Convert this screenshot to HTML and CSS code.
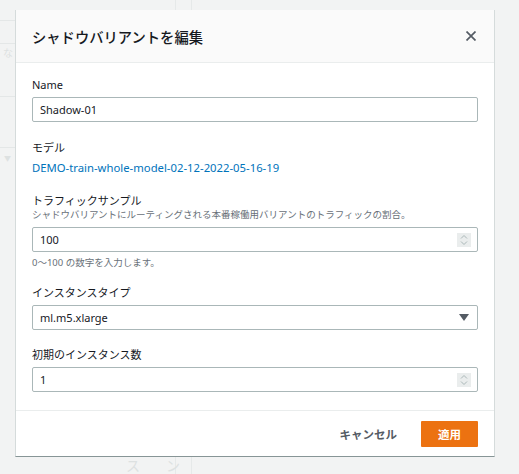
FILE: index.html
```html
<!DOCTYPE html>
<html lang="ja">
<head>
<meta charset="utf-8">
<title>シャドウバリアントを編集</title>
<link rel="stylesheet" href="styles.css">
</head>
<body>
<div class="backdrop" aria-hidden="true">
  <div class="hline l1"></div>
  <div class="hline l2"></div>
  <div class="hline l3"></div>
  <div class="hline l4"></div>
  <div class="vline v1"></div>
  <div class="vline v2"></div>
  <span class="ghost g1">な</span>
  <span class="ghost g2">▼</span>
  <span class="ghost g3">ス</span>
  <span class="ghost g4">ン</span>
</div>
<div class="modal">
  <div class="modal-header">
    <h2 class="modal-title">シャドウバリアントを編集</h2>
    <button class="close-btn" aria-label="閉じる">
      <svg width="10" height="10" viewBox="0 0 10 10"><path d="M0.5 0.5 L9.5 9.5 M9.5 0.5 L0.5 9.5" stroke="#545b64" stroke-width="1.7" fill="none"/></svg>
    </button>
  </div>
  <div class="modal-body">
    <div class="field f-name">
      <div class="label">Name</div>
      <div class="input"><span class="value">Shadow-01</span></div>
    </div>
    <div class="field f-model">
      <div class="label">モデル</div>
      <a class="link" href="#">DEMO-train-whole-model-02-12-2022-05-16-19</a>
    </div>
    <div class="field">
      <div class="label">トラフィックサンプル</div>
      <div class="desc">シャドウバリアントにルーティングされる本番稼働用バリアントのトラフィックの割合。</div>
      <div class="input"><span class="value">100</span><span class="spinner"><svg width="8" height="12" viewBox="0 0 8 12"><path d="M1 4.5 L4 1.5 L7 4.5 M1 7.5 L4 10.5 L7 7.5" stroke="#aab7b8" stroke-width="1" fill="none"/></svg></span></div>
      <div class="help">0〜100 の数字を入力します。</div>
    </div>
    <div class="field f-type">
      <div class="label">インスタンスタイプ</div>
      <div class="input select"><span class="value">ml.m5.xlarge</span><svg class="caret" width="10" height="7" viewBox="0 0 10 7"><path d="M0 0 H10 L5 7 Z" fill="#545b64"/></svg></div>
    </div>
    <div class="field">
      <div class="label">初期のインスタンス数</div>
      <div class="input"><span class="value">1</span><span class="spinner"><svg width="8" height="12" viewBox="0 0 8 12"><path d="M1 4.5 L4 1.5 L7 4.5 M1 7.5 L4 10.5 L7 7.5" stroke="#aab7b8" stroke-width="1" fill="none"/></svg></span></div>
    </div>
  </div>
  <div class="modal-footer">
    <button class="btn-link">キャンセル</button>
    <button class="btn-primary">適用</button>
  </div>
</div>
</body>
</html>
```
FILE: styles.css
```css
html, body {
  margin: 0;
  padding: 0;
}
body {
  width: 519px;
  height: 474px;
  background: #f2f3f3;
  font-family: "Noto Sans", "Noto Sans CJK JP", sans-serif;
  color: #16191f;
  position: relative;
  overflow: hidden;
}
.backdrop {
  position: absolute;
  inset: 0;
}
.hline {
  position: absolute;
  left: 0;
  width: 200px;
  height: 1px;
  background: #e4e7e7;
}
.l1 { top: 20px; }
.l2 { top: 43px; }
.l3 { top: 96px; }
.l4 { top: 147px; }
.vline {
  position: absolute;
  top: 0;
  width: 1px;
  height: 474px;
  background: #e6e9e9;
}
.v1 { left: 175px; }
.v2 { left: 191px; }
.ghost {
  position: absolute;
  color: #dde1e1;
  font-size: 10px;
}
.g1 { left: 3px; top: 45px; }
.g2 { left: 4px; top: 153px; font-size: 7px; }
.g3 { left: 126px; top: 455px; font-size: 14px; }
.g4 { left: 166px; top: 455px; font-size: 14px; }

.modal {
  position: relative;
  margin: 10px 0 0 15px;
  width: 480px;
  box-sizing: border-box;
  background: #ffffff;
  border: 1px solid #d5dbdb;
  border-bottom-color: #879596;
  border-top: none;
}
.modal-header {
  height: 53px;
  box-sizing: border-box;
  background: #fafafa;
  border-bottom: 1px solid #eaeded;
  display: flex;
  align-items: center;
  justify-content: space-between;
  padding: 0 16px 0 16px;
}
.modal-title {
  margin: 0;
  font-size: 14.3px;
  font-weight: 500;
  color: #16191f;
}
.close-btn {
  border: none;
  background: none;
  padding: 0;
  margin-right: 2px;
  display: flex;
}
.modal-body {
  padding: 14px 16px 18px 16px;
  display: flex;
  flex-direction: column;
  gap: 16px;
  border-bottom: 1px solid #eaeded;
}
.field {
  display: flex;
  flex-direction: column;
}
.f-name {
  margin-bottom: 2px;
}
.f-model {
  margin-bottom: 1px;
}
.f-type {
  margin-bottom: 1px;
}
.label {
  font-size: 11px;
  line-height: 16px;
  color: #16191f;
  margin-bottom: 4px;
}
.desc {
  font-size: 9.5px;
  line-height: 13px;
  color: #687078;
  margin-top: -5px;
  margin-bottom: 6px;
}
.help {
  font-size: 9.5px;
  line-height: 13px;
  color: #687078;
  margin-top: 4px;
}
.link {
  font-size: 11.3px;
  line-height: 16px;
  color: #0073bb;
  text-decoration: none;
}
.input {
  height: 25px;
  box-sizing: border-box;
  border: 1px solid #aab7b8;
  border-radius: 2px;
  display: flex;
  align-items: center;
  justify-content: space-between;
  padding: 0 6px 0 7px;
}
.value {
  font-size: 11px;
  color: #16191f;
}
.spinner {
  width: 14px;
  height: 14px;
  background: #eaeded;
  display: flex;
  align-items: center;
  justify-content: center;
}
.select .caret {
  margin-right: 2px;
}
.modal-footer {
  height: 45px;
  box-sizing: border-box;
  display: flex;
  align-items: center;
  justify-content: flex-end;
  gap: 24px;
  padding: 0 16px 0 16px;
}
.btn-link {
  border: none;
  background: none;
  font-family: inherit;
  font-size: 11.5px;
  font-weight: 700;
  color: #545b64;
  padding: 0;
}
.btn-primary {
  border: none;
  background: #ec7211;
  color: #ffffff;
  font-family: inherit;
  font-size: 11.5px;
  font-weight: 700;
  width: 57px;
  height: 26px;
  border-radius: 1px;
  padding: 0;
}
```
